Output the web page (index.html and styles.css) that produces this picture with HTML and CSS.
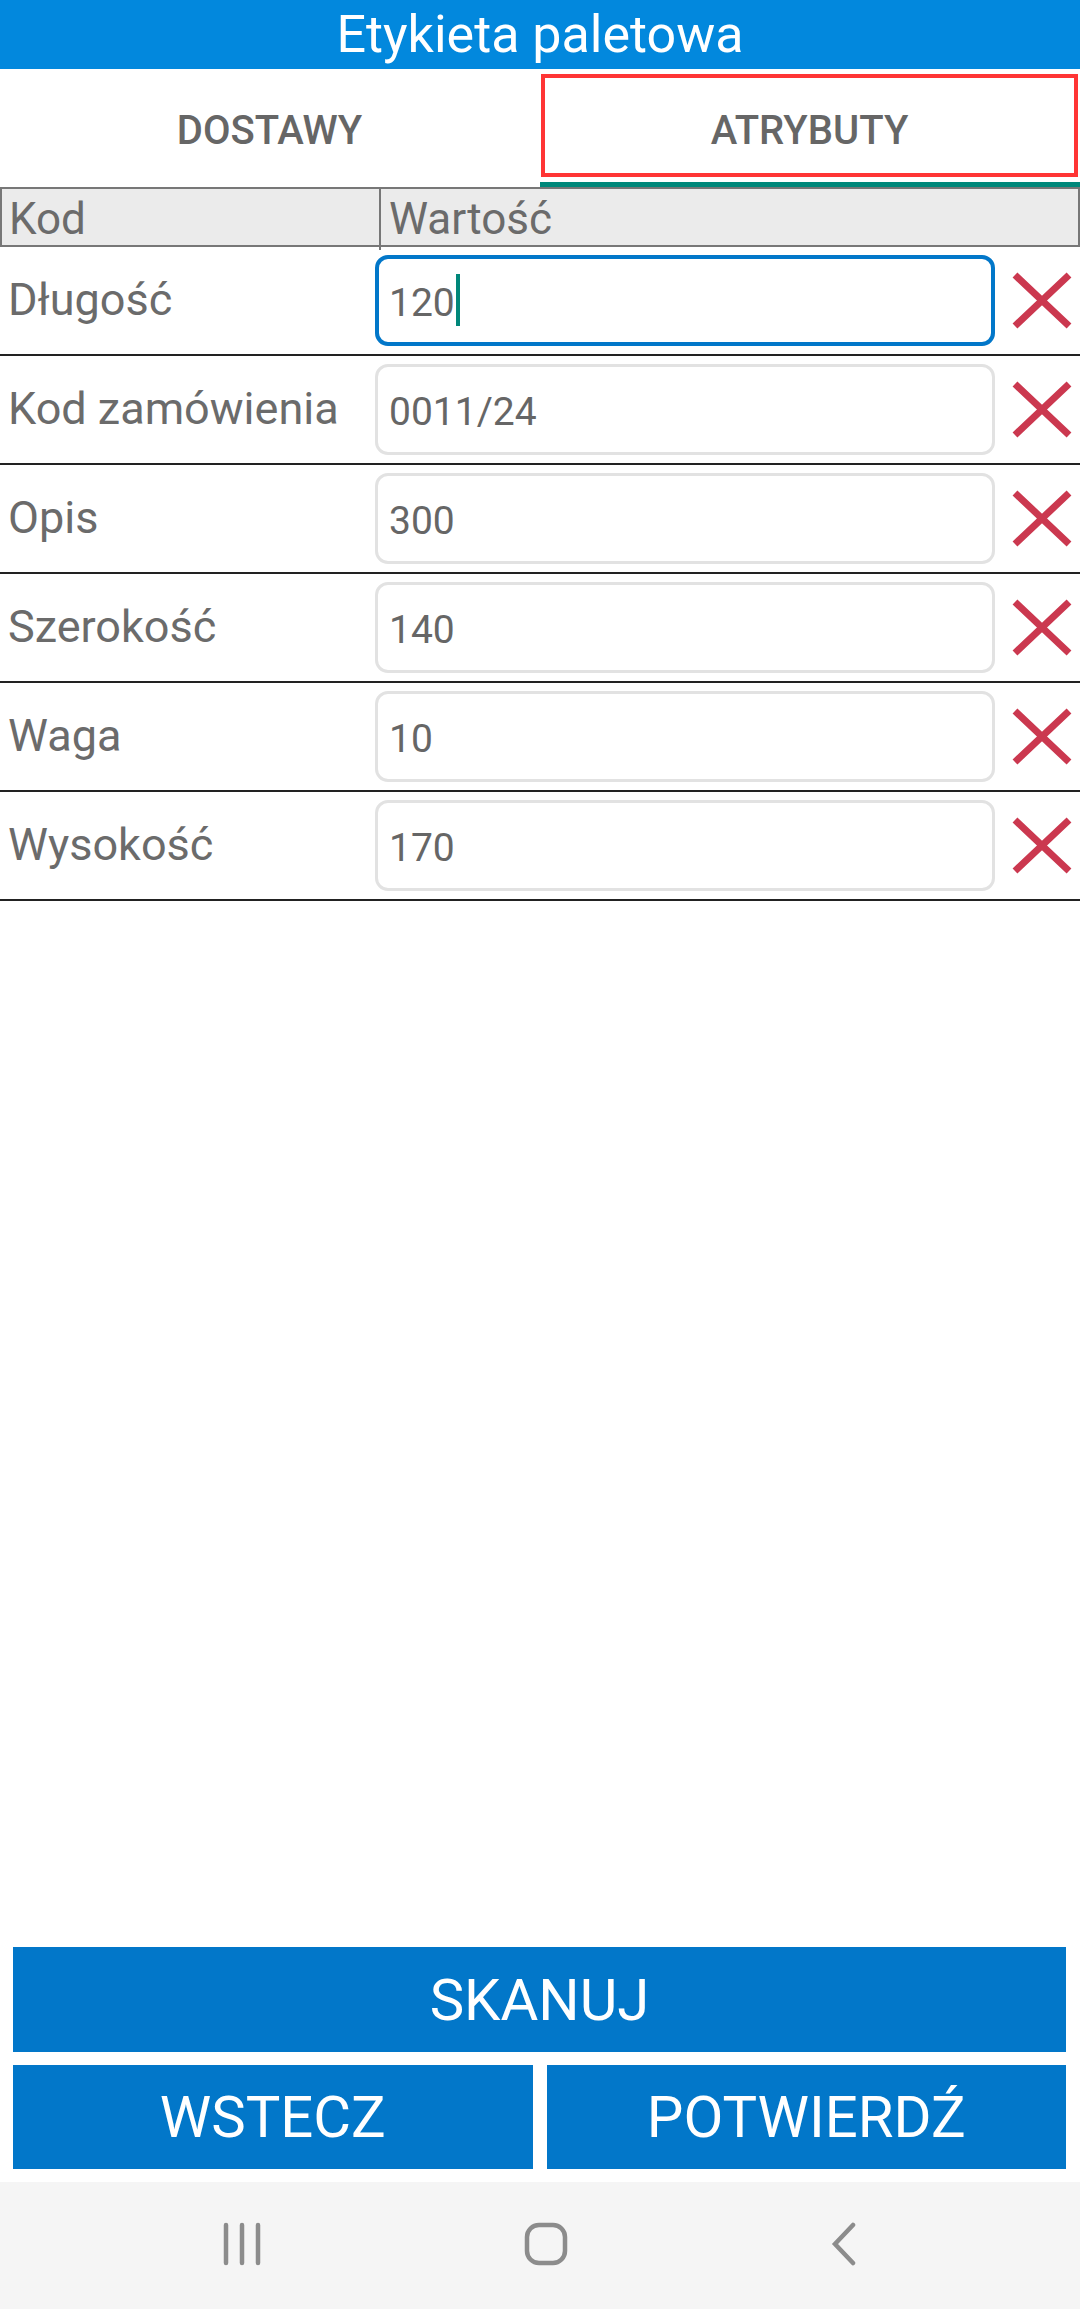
FILE: index.html
```html
<!DOCTYPE html>
<html lang="pl">

<head>
    <meta charset="UTF-8">
    <meta name="viewport" content="width=device-width, initial-scale=1.0">
    <title>Etykieta paletowa</title>
    <link rel="stylesheet" href="styles.css">
</head>

<body>

    <div class="title-bar">Etykieta paletowa</div>

    <div class="tabs">
        <div class="tab">
            <div class="tab-label">DOSTAWY</div>
            <div class="tab-line"></div>
        </div>
        <div class="tab active">
            <div class="tab-label">ATRYBUTY</div>
            <div class="tab-line"></div>
        </div>
    </div>

    <div class="grid-head">
        <div class="head-cell">Kod</div>
        <div class="head-cell">Wartość</div>
    </div>

    <div class="rows">
        <div class="row">
            <div class="label">Długość</div>
            <div class="field focused">120<span class="caret"></span></div>
            <div class="remove"><svg viewBox="0 0 60 57"><path d="M3 3 L57 54 M57 3 L3 54" /></svg></div>
        </div>
        <div class="row">
            <div class="label">Kod zamówienia</div>
            <div class="field">0011/24</div>
            <div class="remove"><svg viewBox="0 0 60 57"><path d="M3 3 L57 54 M57 3 L3 54" /></svg></div>
        </div>
        <div class="row">
            <div class="label">Opis</div>
            <div class="field">300</div>
            <div class="remove"><svg viewBox="0 0 60 57"><path d="M3 3 L57 54 M57 3 L3 54" /></svg></div>
        </div>
        <div class="row">
            <div class="label">Szerokość</div>
            <div class="field">140</div>
            <div class="remove"><svg viewBox="0 0 60 57"><path d="M3 3 L57 54 M57 3 L3 54" /></svg></div>
        </div>
        <div class="row">
            <div class="label">Waga</div>
            <div class="field">10</div>
            <div class="remove"><svg viewBox="0 0 60 57"><path d="M3 3 L57 54 M57 3 L3 54" /></svg></div>
        </div>
        <div class="row">
            <div class="label">Wysokość</div>
            <div class="field">170</div>
            <div class="remove"><svg viewBox="0 0 60 57"><path d="M3 3 L57 54 M57 3 L3 54" /></svg></div>
        </div>
    </div>

    <div class="spacer"></div>

    <div class="actions">
        <button class="btn wide">SKANUJ</button>
        <div class="btn-row">
            <button class="btn">WSTECZ</button>
            <button class="btn">POTWIERDŹ</button>
        </div>
    </div>

    <div class="nav-bar">
        <svg class="nav-icon" viewBox="0 0 40 44">
            <path d="M4 3 V41 M20 3 V41 M36 3 V41" />
        </svg>
        <svg class="nav-icon" viewBox="0 0 44 44">
            <rect x="3" y="3" width="38" height="38" rx="12" />
        </svg>
        <svg class="nav-icon" viewBox="0 0 28 44">
            <path d="M23 3 L5 22 L23 41" />
        </svg>
    </div>

</body>

</html>
```

FILE: styles.css
```css
body {
    margin: 0;
    width: 1080px;
    height: 2309px;
    display: flex;
    flex-direction: column;
    background-color: #fff;
    font-family: Roboto, "Noto Sans", sans-serif;
    overflow: hidden;
}

.title-bar {
    height: 69px;
    line-height: 70px;
    background-color: #0288dd;
    color: #fff;
    font-size: 52px;
    text-align: center;
}

.tabs {
    display: flex;
    height: 118px;
}

.tab {
    flex: 1;
    display: flex;
    flex-direction: column;
}

.tab-label {
    flex: 1;
    margin: 5px 2px 5px 1px;
    border: 4px solid transparent;
    display: flex;
    justify-content: center;
    align-items: center;
    padding-top: 9px;
    color: #666;
    font-size: 40px;
    font-weight: 500;
}

.tab-line {
    height: 5px;
}

.tab.active .tab-label {
    border-color: #ff3535;
}

.tab.active .tab-line {
    background-color: #00877a;
}

.grid-head {
    display: grid;
    grid-template-columns: 377px 1fr;
    height: 60px;
    box-sizing: border-box;
    background-color: #ebebeb;
    border: 2px solid #777;
}

.head-cell {
    color: #6b6b6b;
    font-size: 44px;
    line-height: 61px;
    padding-left: 7px;
}

.head-cell + .head-cell {
    border-left: 2px solid #777;
    padding-left: 8px;
}

.row {
    display: grid;
    grid-template-columns: 375px 620px 1fr;
    align-items: center;
    height: 109px;
    box-sizing: border-box;
    border-bottom: 2px solid #222;
}

.label {
    padding-left: 8px;
    padding-bottom: 3px;
    color: #6b6b6b;
    font-size: 45px;
}

.field {
    height: 91px;
    box-sizing: border-box;
    border: 3px solid #e2e2e2;
    border-radius: 13px;
    padding-left: 11px;
    padding-top: 5px;
    display: flex;
    align-items: center;
    color: #666;
    font-size: 39px;
}

.field.focused {
    border-color: #0277c9;
    border-width: 4px;
    padding-left: 10px;
}

.caret {
    display: inline-block;
    width: 4px;
    height: 52px;
    margin-left: 1px;
    margin-bottom: 6px;
    background-color: #00877a;
}

.remove {
    display: flex;
    justify-content: center;
    padding-left: 8px;
}

.remove svg {
    width: 60px;
    height: 57px;
}

.remove path {
    stroke: #cb384f;
    stroke-width: 7;
    fill: none;
}

.spacer {
    flex: 1;
}

.actions {
    display: flex;
    flex-direction: column;
    gap: 13px;
    padding: 0 14px 13px 13px;
}

.btn-row {
    display: grid;
    grid-template-columns: 1fr 1fr;
    gap: 14px;
}

.btn {
    height: 105px;
    border: none;
    border-radius: 0;
    margin: 0;
    padding: 0;
    background-color: #0277c9;
    color: #fff;
    font-family: Roboto, "Noto Sans", sans-serif;
    font-size: 58px;
}

.btn-row .btn {
    height: 104px;
}

.nav-bar {
    height: 127px;
    background-color: #f5f5f5;
    display: flex;
    justify-content: center;
    align-items: center;
    gap: 262px;
    padding-bottom: 4px;
    box-sizing: border-box;
}

.nav-icon {
    height: 44px;
    width: auto;
    fill: none;
    stroke: #8c8c8c;
    stroke-width: 4.5;
    stroke-linecap: round;
}
```
